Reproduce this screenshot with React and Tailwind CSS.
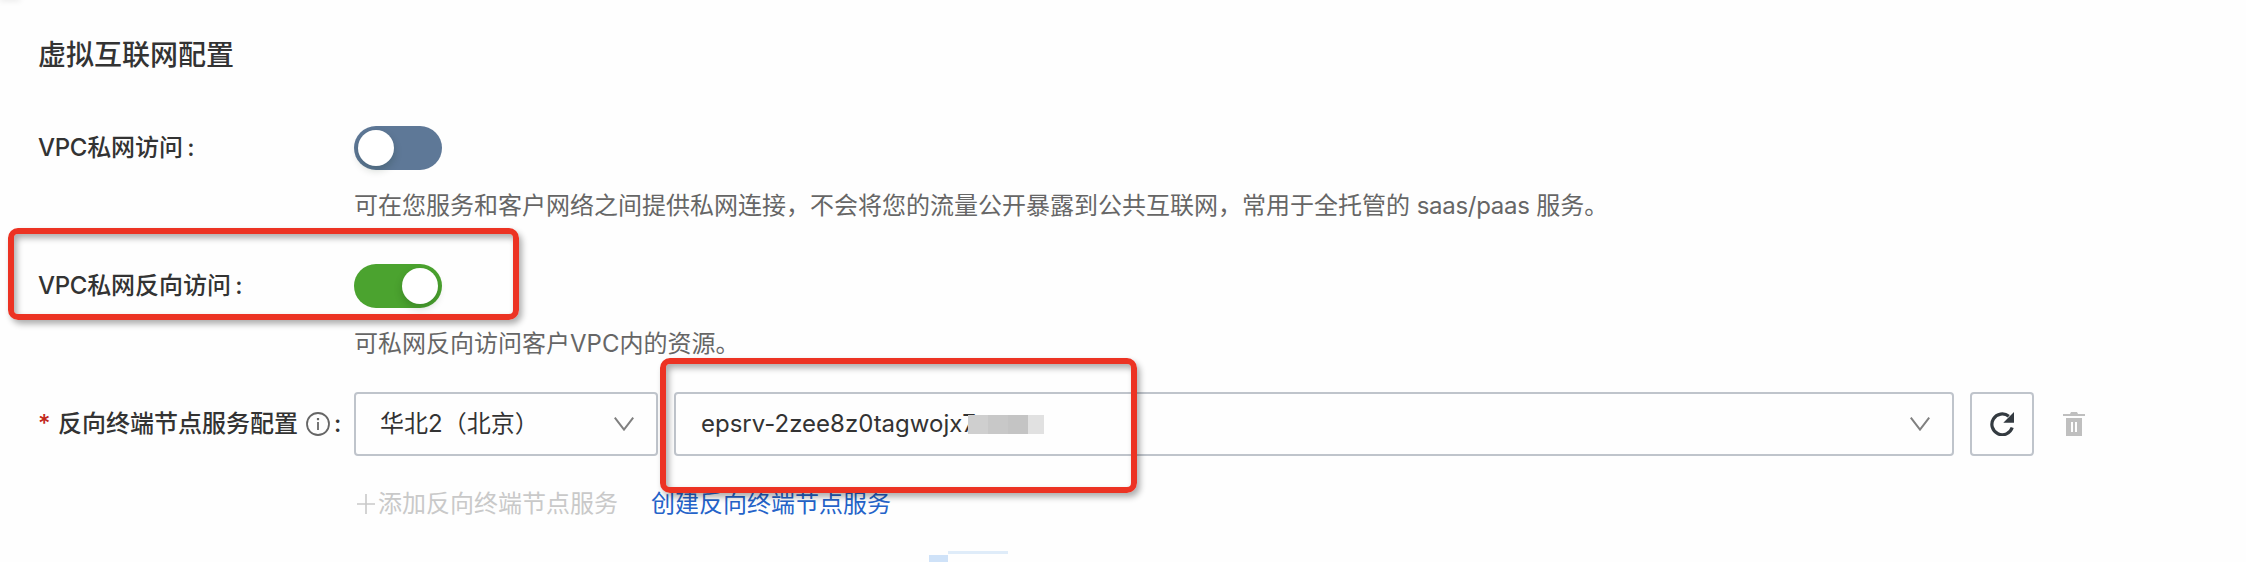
function Switch({ on }) {
  return (
    <div
      role="switch"
      aria-checked={on}
      className={
        "flex h-11 w-[88px] items-center rounded-full px-1 " +
        (on ? "justify-end bg-[#4ba32f]" : "justify-start bg-[#5e7897]")
      }
    >
      <span className="h-9 w-9 rounded-full bg-white shadow-[0_4px_8px_rgba(0,35,11,0.2)]" />
    </div>
  );
}

function Chevron() {
  return (
    <svg width="20" height="14" viewBox="0 0 20 14" fill="none" stroke="#808080" strokeWidth="2">
      <path d="M0.8 0.6 10 12.6 19.2 0.6" />
    </svg>
  );
}

function InfoIcon() {
  return (
    <svg width="24" height="24" viewBox="0 0 24 24" fill="none" stroke="#666" strokeWidth="1.8">
      <circle cx="12" cy="12" r="11" />
      <path d="M12 10v8" />
      <path d="M12 6v2.2" strokeWidth="2.2" />
    </svg>
  );
}

function RefreshIcon() {
  return (
    <svg width="24" height="24" viewBox="0 0 24 24" fill="none">
      <path d="M22.2 15.5A10.4 10.4 0 1 1 18.8 4.2" stroke="#333a40" strokeWidth="3.2" />
      <path d="M24 0v10.7H13.3z" fill="#333a40" />
    </svg>
  );
}

function TrashIcon() {
  return (
    <svg width="22" height="24" viewBox="0 0 22 24" fill="#bfbfbf">
      <path d="M0 2h7l1-2h6l1 2h7v2H0z" />
      <path fillRule="evenodd" d="M3 6h16v18H3zM8 10v10h2V10zM12 10v10h2V10z" />
    </svg>
  );
}

export default function App() {
  return (
    <div className="relative flex h-[562px] w-[2246px] flex-col overflow-hidden bg-[#fefefe] pl-[38px] pt-[35px] font-['Inter','Noto_Sans_CJK_SC',sans-serif] text-2xl leading-10 text-[#333]">
      <h2 className="h-10 text-[28px] font-medium leading-10">虚拟互联网配置</h2>

      <div className="mt-[51px] flex h-11 items-center">
        <div className="w-[316px] font-medium">
          <span className="tracking-[-0.3px]">VPC</span>私网访问<span className="ml-1">:</span>
        </div>
        <Switch on={false} />
      </div>
      <p className="ml-[316px] mt-4 h-10 whitespace-nowrap text-[#666]">
        可在您服务和客户网络之间提供私网连接，不会将您的流量公开暴露到公共互联网，常用于全托管的{" "}
        <span className="tracking-[-0.3px]">saas/paas</span> 服务。
      </p>

      <div className="mt-[38px] flex h-11 items-center">
        <div className="w-[316px] font-medium">
          <span className="tracking-[-0.3px]">VPC</span>私网反向访问<span className="ml-1">:</span>
        </div>
        <Switch on={true} />
      </div>
      <p className="ml-[316px] mt-4 h-10 whitespace-nowrap text-[#666]">可私网反向访问客户VPC内的资源。</p>

      <div className="mt-7 flex h-16 items-center">
        <div className="flex w-[316px] items-center whitespace-nowrap font-medium">
          <span className="w-5 text-[#c1271a]">*</span>
          <span className="w-[248px]">反向终端节点服务配置</span>
          <InfoIcon />
          <span className="ml-1">:</span>
        </div>
        <div className="flex h-16 w-[304px] items-center justify-between rounded-[4px] border-2 border-[#bfc4cb] pl-6 pr-[22px]">
          <span>华北2（北京）</span>
          <Chevron />
        </div>
        <div className="ml-4 flex h-16 w-[1280px] items-center justify-between rounded-[4px] border-2 border-[#bfc4cb] pl-[25px] pr-[22px]">
          <div className="flex items-center">
            <span className="w-[275px] whitespace-nowrap">epsrv-2zee8z0tagwojx7</span>
            <div className="relative -ml-2 flex h-[19px]">
              <span className="w-5 bg-[#cfcfcf]" />
              <span className="w-5 bg-[#c8c8c8]" />
              <span className="w-5 bg-[#c4c4c4]" />
              <span className="w-4 bg-[#e1e1e1]" />
            </div>
          </div>
          <Chevron />
        </div>
        <button className="ml-4 flex h-16 w-16 items-center justify-center rounded-[4px] border-2 border-[#bfc4cb]">
          <RefreshIcon />
        </button>
        <div className="ml-[29px]">
          <TrashIcon />
        </div>
      </div>

      <div className="ml-[316px] mt-7 flex h-10 items-center whitespace-nowrap">
        <span className="flex w-[297px] items-center text-[#c9c9c9]">
          <svg className="ml-[3px] mr-[2px]" width="19" height="24" viewBox="0 0 19 24" stroke="#c9c9c9" strokeWidth="1.6">
            <path d="M0 12h18M9 2v20" />
          </svg>
          添加反向终端节点服务
        </span>
        <a className="text-[#2463c9]">创建反向终端节点服务</a>
      </div>

      <div className="absolute left-2 top-[228px] h-[92px] w-[511px] rounded-[10px] border-6 border-[#ec3323] shadow-[3px_4px_6px_rgba(0,0,0,0.32),inset_3px_4px_6px_rgba(0,0,0,0.32)]" />
      <div className="absolute left-[660px] top-[358px] h-[135px] w-[477px] rounded-[10px] border-6 border-[#ec3323] shadow-[3px_4px_6px_rgba(0,0,0,0.32),inset_3px_4px_6px_rgba(0,0,0,0.32)]" />
      <div className="absolute left-[929px] top-[551px] flex items-start">
        <span className="mt-1 h-2 w-[19px] bg-[#cfe2f8]" />
        <span className="h-[3px] w-[60px] bg-[#dfecf9]" />
      </div>
      <div className="absolute left-0 top-[-3px] h-[3px] w-5 shadow-[0_0_6px_rgba(0,0,0,0.15)]" />
    </div>
  );
}
